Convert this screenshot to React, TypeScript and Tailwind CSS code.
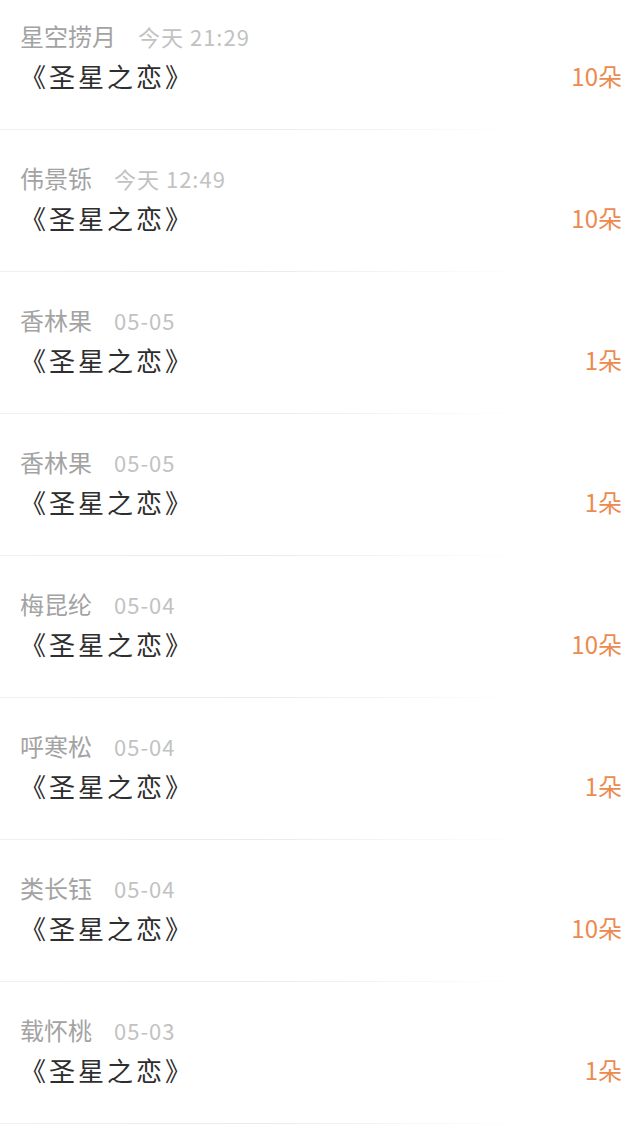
import React from "react";

type Gift = { name: string; time: string; title: string; count: number };

const gifts: Gift[] = [
  { name: "星空捞月", time: "今天 21:29", title: "《圣星之恋》", count: 10 },
  { name: "伟景铄", time: "今天 12:49", title: "《圣星之恋》", count: 10 },
  { name: "香林果", time: "05-05", title: "《圣星之恋》", count: 1 },
  { name: "香林果", time: "05-05", title: "《圣星之恋》", count: 1 },
  { name: "梅昆纶", time: "05-04", title: "《圣星之恋》", count: 10 },
  { name: "呼寒松", time: "05-04", title: "《圣星之恋》", count: 1 },
  { name: "类长钰", time: "05-04", title: "《圣星之恋》", count: 10 },
  { name: "载怀桃", time: "05-03", title: "《圣星之恋》", count: 1 },
];

export default function App() {
  return (
    <div
      className="min-h-[1141px] w-[640px] overflow-hidden bg-white"
      style={{ fontFamily: '"Noto Sans CJK SC", "Noto Sans", sans-serif' }}
    >
      {gifts.map((g, i) => (
        <div key={i}>
          <div className={`${i === 0 ? "pt-[22px]" : "pt-[34px]"} pb-[37px] pl-5 pr-[18px]`}>
            {/* name + time */}
            <div className="flex h-[28px] items-center">
              <span className="text-[24px] leading-[28px] text-[#a3a3a3]">{g.name}</span>
              <span className="ml-[22px] text-[22px] leading-[28px] tracking-[1px] text-[#c2c2c2]">
                {g.time}
              </span>
            </div>
            {/* title + count */}
            <div className="mt-[10px] flex h-[32px] items-center justify-between">
              <span className="text-[26px] leading-[32px] tracking-[3px] text-[#2e2e2e]">{g.title}</span>
              <span className="text-[24px] leading-[32px] text-[#ec8a4f]">{g.count}朵</span>
            </div>
          </div>
          <div className="h-px w-[525px] bg-gradient-to-r from-[#f0f0f0] via-[#ebebeb] to-transparent" />
        </div>
      ))}
    </div>
  );
}
